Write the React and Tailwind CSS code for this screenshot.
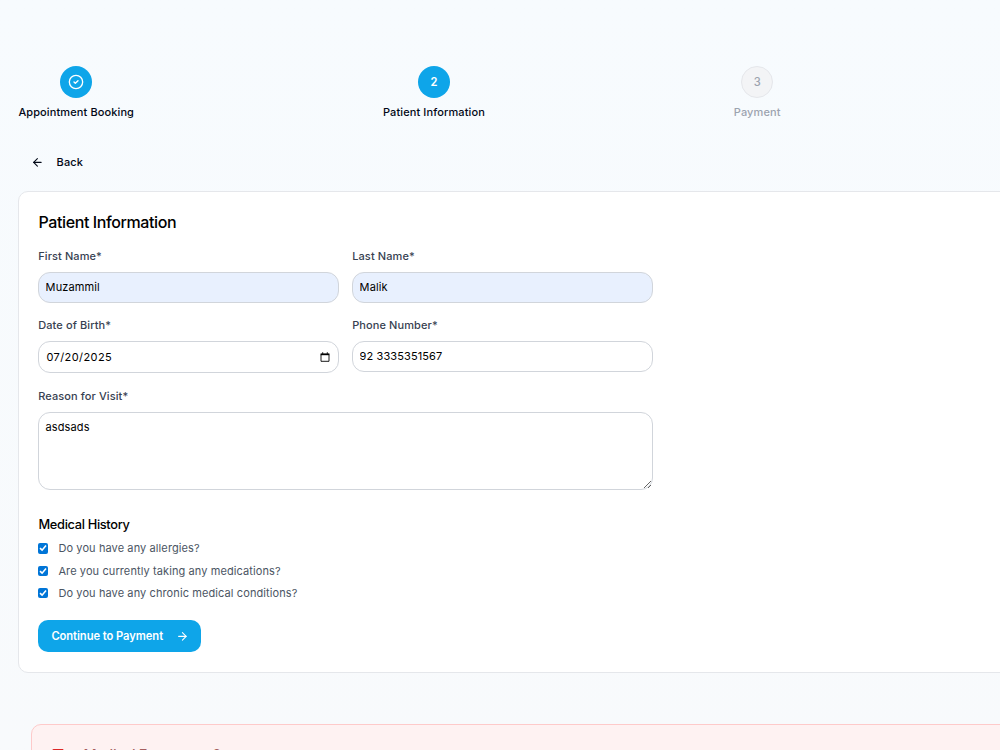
import { ArrowLeft, ArrowRight, CircleCheck } from "lucide-react";

const input =
  "block w-full rounded-[12px] border border-[#d1d5db] px-[6.6px] text-[11px] tracking-[0.1px] leading-[16px] text-black outline-none";

function Step({ label, active, children }) {
  return (
    <div className="flex flex-col items-center whitespace-nowrap">
      <div
        className={
          active
            ? "flex size-8 items-center justify-center rounded-full bg-[#0ea5e9] text-[11.2px] font-semibold text-white"
            : "flex size-8 items-center justify-center rounded-full border border-[#e5e7eb] bg-[#f3f4f6] text-[11.2px] font-medium text-[#9ca3af]"
        }
      >
        {children}
      </div>
      <div
        className={
          active
            ? "mt-1.5 text-[11px] tracking-[0.11px] leading-4 font-medium text-[#020817]"
            : "mt-1.5 text-[11px] tracking-[0.11px] leading-4 font-medium text-[#9ca3af]"
        }
      >
        {label}
      </div>
    </div>
  );
}

function Field({ label, children }) {
  return (
    <div>
      <label className="mb-2 block pl-[0.2px] text-[11px] tracking-[0.1px] leading-4 font-medium text-[#374151]">{label}</label>
      {children}
    </div>
  );
}

function CalendarIcon() {
  return (
    <svg viewBox="0 0 10 10" className="size-[10px]" fill="none" stroke="#000">
      <path d="M1 2.5h8v6.8H1z" strokeWidth="0.9" />
      <path d="M.6 2.3h8.8" strokeWidth="1.8" />
      <path d="M2.7.3v1.5M7.3.3v1.5" strokeWidth="1" />
    </svg>
  );
}

function Question({ children }) {
  return (
    <div className="flex h-4 items-center gap-[10px]">
      <span className="flex size-[10.4px] shrink-0 items-center justify-center rounded-[2px] bg-[#0075d7]">
        <svg viewBox="0 0 10 10" className="size-[10px]" fill="none" stroke="#fff" strokeWidth="1.6">
          <path d="M2 5.2 4.1 7.2 8 2.6" />
        </svg>
      </span>
      <span className="text-[11px] tracking-[0.1px] leading-4 whitespace-nowrap text-[#4b5563]">{children}</span>
    </div>
  );
}

export default function App() {
  return (
    <div className="h-[750px] w-[1000px] overflow-hidden bg-gradient-to-b from-[#f7fbfe] to-[#f8fafc] pt-[66px] pl-[18px] font-['Inter',sans-serif] text-black">
      <div className="flex gap-[248.9px] pl-[0.4px]">
        <Step label="Appointment Booking" active>
          <CircleCheck size={16} strokeWidth={2} />
        </Step>
        <Step label="Patient Information" active>2</Step>
        <Step label="Payment">3</Step>
      </div>

      <button className="mt-[30px] ml-[13px] flex h-6 items-center gap-[12.8px] text-[11px] tracking-[0.12px] font-medium text-[#020817]">
        <ArrowLeft size={12.8} strokeWidth={2} />
        Back
      </button>

      <section className="mt-[17px] h-[482px] w-[1100px] rounded-[10px] border border-[#e5e7eb] bg-white pt-[18px] pl-[19px]">
        <h2 className="pl-[0.5px] text-[16px] leading-6 font-medium tracking-[-0.4px]">Patient Information</h2>
        <div className="mt-[14px] grid w-[615px] grid-cols-2 gap-x-[13px]">
          <Field label="First Name*">
            <input className={`${input} h-[31px] bg-[#e8f0fe] pb-[1px]`} defaultValue="Muzammil" />
          </Field>
          <Field label="Last Name*">
            <input className={`${input} h-[31px] bg-[#e8f0fe] pb-[1px]`} defaultValue="Malik" />
          </Field>
        </div>
        <div className="mt-[14px] grid w-[615px] grid-cols-2 gap-x-[13px]">
          <Field label="Date of Birth*">
            <div className={`${input} h-8`}>
              <div className="flex h-full items-center justify-between pr-[1.7px] pl-[0.8px]">
                <span className="tracking-[0.42px]">07/20/2025</span>
                <CalendarIcon />
              </div>
            </div>
          </Field>
          <Field label="Phone Number*">
            <input className={`${input} h-[31px] bg-white pb-[1px]`} defaultValue="92 3335351567" />
          </Field>
        </div>
        <div className="mt-[15px] w-[615px]">
          <Field label="Reason for Visit*">
            <textarea className={`${input} h-[78px] resize bg-white py-[6.4px]`} defaultValue="asdsads" />
          </Field>
        </div>
        <h3 className="mt-[25px] pl-[0.5px] text-[12.8px] leading-[19px] font-medium tracking-[-0.32px]">Medical History</h3>
        <div className="mt-[6.4px] flex flex-col gap-[6.4px]">
          <Question>Do you have any allergies?</Question>
          <Question>Are you currently taking any medications?</Question>
          <Question>Do you have any chronic medical conditions?</Question>
        </div>
        <button className="mt-[18.8px] flex h-8 w-[163px] items-center gap-[13px] rounded-[10px] bg-[#0ea5e9] pt-[1px] pl-[13.4px] text-[11.2px] font-semibold tracking-[-0.06px] whitespace-nowrap text-white">
          Continue to Payment
          <ArrowRight size={12.8} strokeWidth={2} />
        </button>
      </section>

      <section className="mt-[51px] ml-[13px] h-[120px] w-[1074px] rounded-[10px] border border-[#fecaca] bg-[#fef2f2] pt-[19.5px] pl-[20px]">
        <div className="flex items-center gap-[19.5px]">
          <svg viewBox="0 0 12 12" className="size-[12px]" fill="none" stroke="#dc2626" strokeWidth="1.2">
            <rect x="1" y="0.5" width="10" height="10" rx="1" />
          </svg>
          <span className="text-[14.4px] leading-5 font-medium tracking-[-0.36px] text-[#7f1d1d]/70">Medical Emergency?</span>
        </div>
      </section>
    </div>
  );
}
